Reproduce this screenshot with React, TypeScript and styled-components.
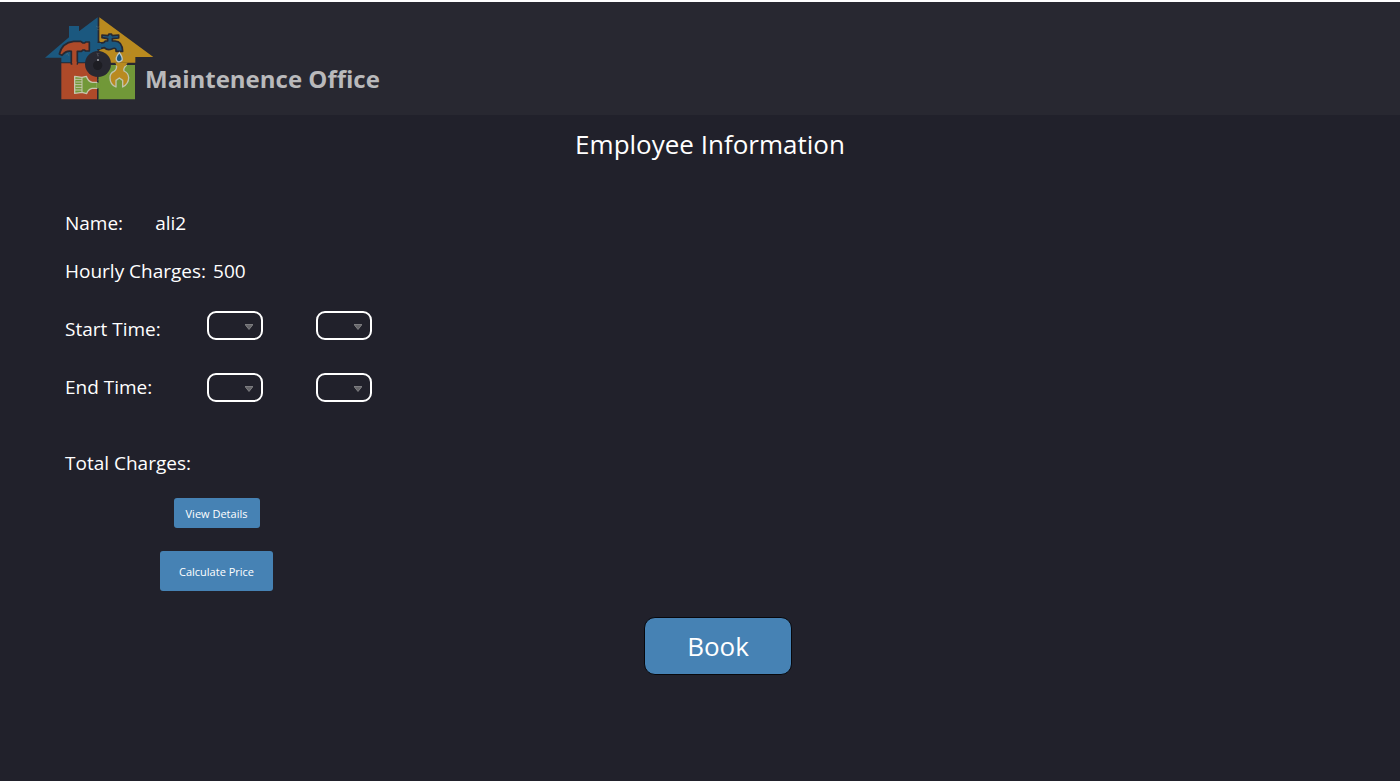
import React from "react";
import styled, { createGlobalStyle } from "styled-components";

const GlobalStyle = createGlobalStyle`
  * { box-sizing: border-box; }
  body {
    margin: 0;
    background: #21212b;
    color: #ffffff;
    font-family: "Segoe UI", "Open Sans", "Noto Sans", sans-serif;
  }
`;

const Page = styled.div`
  min-height: 100vh;
  border-top: 2px solid #ffffff;
`;

const Header = styled.header`
  display: flex;
  align-items: flex-start;
  height: 113px;
  padding: 8px 40px 0;
  background: #282831;
`;

const LogoSvg = styled.svg`
  flex: none;
  width: 120px;
  height: 95px;
`;

const Brand = styled.div`
  margin: 51px 0 0 -15px;
  color: #b9b9bb;
  font-size: 24px;
  font-weight: 700;
  line-height: 36px;
  white-space: nowrap;
`;

const Title = styled.h1`
  margin: 0;
  padding: 9px 0 0 20px;
  font-size: 26px;
  font-weight: 400;
  line-height: 40px;
  text-align: center;
`;

const Form = styled.form`
  display: flex;
  flex-direction: column;
  padding: 46px 65px 40px;
  font-size: 19px;
  line-height: 26px;
`;

const Details = styled.dl`
  display: flex;
  flex-direction: column;
  gap: 22px;
  margin: 0;
`;

const Detail = styled.div<{ $gap: number }>`
  display: flex;
  gap: ${(p) => p.$gap}px;
`;

const Term = styled.dt`
  white-space: nowrap;
`;

const Value = styled.dd`
  margin: 0;
`;

const Times = styled.div`
  display: flex;
  align-items: flex-start;
  margin: 27px 0 48px;
`;

const TimeLabels = styled.div`
  display: flex;
  flex-direction: column;
  gap: 32px;
  width: 142px;
  padding-top: 5px;
`;

const TimeSelects = styled.div`
  display: grid;
  grid-template-columns: 56px 56px;
  gap: 33px 53px;
`;

const SelectBox = styled.div`
  position: relative;
  height: 29px;
`;

const Select = styled.select`
  display: block;
  width: 100%;
  height: 100%;
  padding: 0 20px 0 6px;
  appearance: none;
  border: 2px solid #ffffff;
  border-radius: 9px;
  background: transparent;
  color: #ffffff;
  font: inherit;
  font-size: 12px;

  option { color: #21212b; }
`;

const Arrow = styled.svg`
  position: absolute;
  top: 13px;
  right: 10px;
  width: 8px;
  height: 6px;
  pointer-events: none;
`;

const Actions = styled.div`
  display: flex;
  flex-direction: column;
  align-items: center;
  align-self: flex-start;
  gap: 23px;
  margin: 22px 0 0 95px;
`;

const Button = styled.button<{ $large?: boolean }>`
  width: ${(p) => (p.$large ? 113 : 86)}px;
  height: ${(p) => (p.$large ? 40 : 30)}px;
  padding: 0;
  border: 0;
  border-radius: 3px;
  background: #4682b4;
  color: #ffffff;
  font-family: inherit;
  font-size: 11px;
  white-space: nowrap;
`;

const BookButton = styled(Button)`
  align-self: center;
  width: 148px;
  height: 58px;
  margin: 26px 0 0 36px;
  border: 1px solid #08080c;
  border-radius: 11px;
  font-size: 26px;
`;

function Logo() {
  return (
    <LogoSvg viewBox="0 0 360 285" role="img" aria-label="House with repair tools">
      <path d="M173 22V157H64V143H15L87 82V48H117V64Z" fill="#1b587f" />
      <path d="M178 22L340 141H286V158H178Z" fill="#b98a1f" />
      <path d="M64 160H171V268H64Z" fill="#ae4a29" />
      <path d="M175 165H285V268H175Z" fill="#719838" />
      <path
        d="M94 162V124Q78 121 66 136L58 132Q66 98 101 94H122L129 99H134L137 96H148V123H137L133 120H129L124 124H112V162Z"
        fill="#ae4a29" stroke="#282831" strokeWidth="5" strokeLinejoin="round"
      />
      <path d="M97 155H110V172H97Z" fill="#ae4a29" />
      <path
        d="M176 96Q190 103 196 93H203V86L186 83V75L204 77L207 72H214L217 77L236 75V84L217 86V93H225Q247 94 248 124H228V118Q225 112 215 117Q202 122 193 113L174 118Z"
        fill="#1b587f" stroke="#282831" strokeWidth="5" strokeLinejoin="round"
      />
      <path d="M170 99H183V117H170Z" fill="#1b587f" />
      <circle cx="174" cy="162" r="39" fill="#282831" />
      <ellipse cx="173" cy="166" rx="14" ry="14" fill="#1d1d23" />
      <circle cx="174" cy="150" r="3" fill="#a9a9ad" />
      <path d="M170 130L174 133L177 130M174 135V139" fill="none" stroke="#75757c" strokeWidth="2" />
      <path
        d="M229 165Q232 177 222 184Q210 189 210 203Q210 223 228 231V211L238 204L248 211V231Q266 221 266 203Q265 188 252 183Q249 175 260 165"
        fill="#b98a1f" stroke="#bfc3ad" strokeWidth="4" strokeLinejoin="round"
      />
      <path d="M229 167Q229 160 224 158H264Q258 161 258 167Z" fill="#b98a1f" />
      <path d="M238 128Q223 146 232 154Q239 158 246 151Q249 143 238 128Z" fill="#1b587f" stroke="#bdc7c9" strokeWidth="4" />
      <path
        d="M104 199L126 202L139 199Q145 216 157 217H171V235H156Q144 238 140 251L126 247L104 250Z"
        fill="#719838" stroke="#c6c6ae" strokeWidth="4" strokeLinejoin="round"
      />
      <path d="M169 219H181V234H169Z" fill="#719838" />
      <path
        d="M105 208H126M107 216H126M105 224H126M107 232H126M105 240H126M126 201V248"
        fill="none" stroke="#c6c6ae" strokeWidth="3"
      />
      <path d="M173 201V217M173 236V266" stroke="#282831" strokeWidth="4" />
      <path d="M168 48L174 52L181 48M171 59H178M77 134L83 130L87 138M258 136L263 130M266 138L271 127M171 211L180 207" fill="none" stroke="#8a8a70" strokeOpacity=".45" strokeWidth="2" />
    </LogoSvg>
  );
}

function TimeSelect({ id, label, options }: { id: string; label?: string; options: string[] }) {
  return (
    <SelectBox>
      <Select id={id} aria-label={label} defaultValue="">
        <option value="" />
        {options.map((o) => (
          <option key={o}>{o}</option>
        ))}
      </Select>
      <Arrow viewBox="0 0 8 6" aria-hidden="true">
        <path d="M0 .5H8L4 5.5Z" fill="#66666a" />
        <path d="M0 .5H8L4 5.5Z" fill="none" stroke="#8c8c8e" strokeWidth=".8" />
      </Arrow>
    </SelectBox>
  );
}

const HOURS = Array.from({ length: 12 }, (_, i) => String(i + 1));
const PERIODS = ["AM", "PM"];

export default function App() {
  return (
    <Page>
      <GlobalStyle />
      <Header>
        <Logo />
        <Brand>Maintenence Office</Brand>
      </Header>
      <main>
        <Title>Employee Information</Title>
        <Form onSubmit={(e) => e.preventDefault()}>
          <Details>
            <Detail $gap={32}>
              <Term>Name:</Term>
              <Value>ali2</Value>
            </Detail>
            <Detail $gap={7}>
              <Term>Hourly Charges:</Term>
              <Value>500</Value>
            </Detail>
          </Details>
          <Times>
            <TimeLabels>
              <label htmlFor="start-hour">Start Time:</label>
              <label htmlFor="end-hour">End Time:</label>
            </TimeLabels>
            <TimeSelects>
              <TimeSelect id="start-hour" options={HOURS} />
              <TimeSelect id="start-period" label="Start period" options={PERIODS} />
              <TimeSelect id="end-hour" options={HOURS} />
              <TimeSelect id="end-period" label="End period" options={PERIODS} />
            </TimeSelects>
          </Times>
          <Detail $gap={7}>
            <span>Total Charges:</span>
            <output />
          </Detail>
          <Actions>
            <Button type="button">View Details</Button>
            <Button type="button" $large>Calculate Price</Button>
          </Actions>
          <BookButton type="submit">Book</BookButton>
        </Form>
      </main>
    </Page>
  );
}
